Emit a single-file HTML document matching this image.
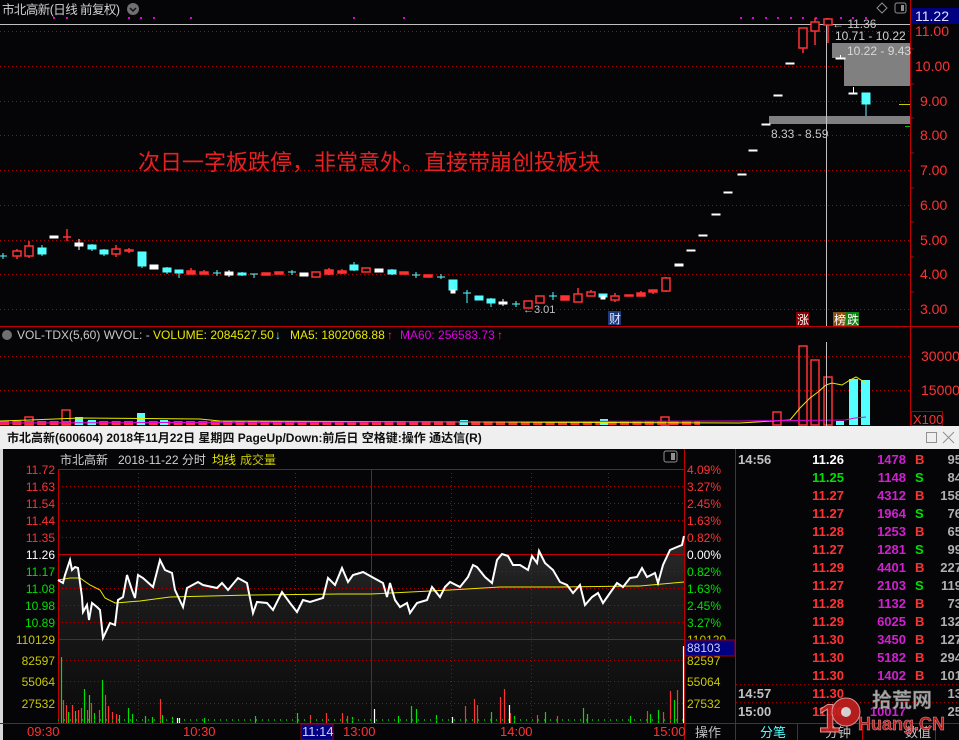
<!DOCTYPE html>
<html><head><meta charset="utf-8"><style>
html,body{margin:0;padding:0;background:#050508;width:959px;height:740px;overflow:hidden}
svg{display:block}
text{font-family:"Liberation Sans","Noto Sans CJK SC",sans-serif}
</style></head><body>
<svg width="959" height="740" viewBox="0 0 959 740" xmlns="http://www.w3.org/2000/svg">
<rect width="959" height="740" fill="#050508"/>
<!-- TOP CHART -->
<text x="2" y="14" font-size="12.5" fill="#d0d0d0" textLength="118">市北高新(日线 前复权)</text>
<circle cx="133" cy="9" r="6" fill="#707070"/><path d="M130 8l3 3 3-3" stroke="#111" stroke-width="1.5" fill="none"/>
<g fill="#e000e0"><rect x="53" y="17" width="2" height="2"/><rect x="66" y="17" width="2" height="2"/><rect x="128" y="17" width="2" height="2"/><rect x="140" y="17" width="2" height="2"/><rect x="153" y="17" width="2" height="2"/><rect x="190" y="17" width="2" height="2"/><rect x="353" y="17" width="2" height="2"/><rect x="403" y="17" width="2" height="2"/><rect x="740" y="17" width="2" height="2"/><rect x="752" y="17" width="2" height="2"/><rect x="765" y="17" width="2" height="2"/><rect x="777" y="17" width="2" height="2"/><rect x="790" y="17" width="2" height="2"/><rect x="802" y="17" width="2" height="2"/><rect x="815" y="17" width="2" height="2"/><rect x="840" y="17" width="2" height="2"/><rect x="852" y="17" width="2" height="2"/><rect x="865" y="17" width="2" height="2"/></g>
<path d="M882 3l5 5-5 5-5-5z" stroke="#909090" fill="none"/>
<rect x="895" y="3" width="11" height="10" rx="2" stroke="#909090" fill="none"/><rect x="901" y="5" width="3" height="6" fill="#909090"/>
<line x1="0" y1="24.5" x2="910" y2="24.5" stroke="#c0c0c0"/>
<g stroke="#b00000" stroke-dasharray="1,3">
<line x1="0" y1="31.5" x2="910" y2="31.5"/><line x1="0" y1="66.5" x2="910" y2="66.5"/><line x1="0" y1="101.5" x2="910" y2="101.5"/><line x1="0" y1="135.5" x2="910" y2="135.5"/><line x1="0" y1="170.5" x2="910" y2="170.5"/><line x1="0" y1="205.5" x2="910" y2="205.5"/><line x1="0" y1="240.5" x2="910" y2="240.5"/><line x1="0" y1="274.5" x2="910" y2="274.5"/><line x1="0" y1="309.5" x2="910" y2="309.5"/>
</g>
<line x1="910.5" y1="0" x2="910.5" y2="426" stroke="#c00000"/>
<g stroke="#c00000"><line x1="910" y1="49" x2="914" y2="49"/><line x1="910" y1="84" x2="914" y2="84"/><line x1="910" y1="118" x2="914" y2="118"/><line x1="910" y1="153" x2="914" y2="153"/><line x1="910" y1="188" x2="914" y2="188"/><line x1="910" y1="222" x2="914" y2="222"/><line x1="910" y1="257" x2="914" y2="257"/><line x1="910" y1="292" x2="914" y2="292"/></g>
<g font-size="14" fill="#ff3232"><text x="915" y="36">11.00</text><text x="915" y="71">10.00</text><text x="920" y="106">9.00</text><text x="920" y="140">8.00</text><text x="920" y="175">7.00</text><text x="920" y="210">6.00</text><text x="920" y="245">5.00</text><text x="920" y="279">4.00</text><text x="920" y="314">3.00</text></g>
<rect x="911" y="8" width="48" height="16" fill="#000080"/><text x="915" y="21" font-size="14" fill="#e0e0ff">11.22</text>
<line x1="906" y1="62.5" x2="910" y2="62.5" stroke="#ff3232"/><line x1="899" y1="104.5" x2="910" y2="104.5" stroke="#c8c800"/><line x1="905" y1="126.5" x2="910" y2="126.5" stroke="#00c000"/>
<rect x="832" y="43" width="78" height="15" fill="#808080"/><rect x="844" y="58" width="66" height="28" fill="#808080"/><rect x="769" y="116" width="141" height="8" fill="#808080"/>
<text x="835" y="40" font-size="12" fill="#d0d0d0">10.71 - 10.22</text>
<text x="847" y="55" font-size="12" fill="#d8d8d8">10.22 - 9.43</text>
<text x="771" y="138" font-size="12" fill="#c8c8c8">8.33 - 8.59</text>
<text x="832" y="28" font-size="12" fill="#c0c0c0">← 11.36</text>
<text x="523" y="313" font-size="11" fill="#c0c0c0">←3.01</text>
<line x1="826.5" y1="18" x2="826.5" y2="326" stroke="#c0c0c0"/>
<g>
<g stroke="#54ffff" fill="#54ffff">
<line x1="3" y1="253" x2="3" y2="259"/><line x1="-1" y1="256" x2="7" y2="256"/>
<line x1="42" y1="245" x2="42" y2="256"/><rect x="38" y="248" width="8" height="6"/>
<line x1="92" y1="244" x2="92" y2="251"/><rect x="88" y="245" width="8" height="4"/>
<line x1="104" y1="249" x2="104" y2="256"/><rect x="100" y="250" width="8" height="4"/>
<line x1="142" y1="252" x2="142" y2="268"/><rect x="138" y="252" width="8" height="14"/>
<line x1="167" y1="267" x2="167" y2="274"/><rect x="163" y="268" width="8" height="4"/>
<line x1="179" y1="270" x2="179" y2="278"/><rect x="175" y="270" width="8" height="3"/>
<line x1="217" y1="270" x2="217" y2="276"/><line x1="213" y1="273" x2="221" y2="273"/>
<line x1="242" y1="272" x2="242" y2="276"/><rect x="238" y="273" width="8" height="2"/>
<line x1="254" y1="274" x2="254" y2="278"/><line x1="250" y1="274" x2="258" y2="274"/>
<line x1="292" y1="270" x2="292" y2="275"/><line x1="288" y1="272" x2="296" y2="272"/>
<line x1="354" y1="262" x2="354" y2="271"/><rect x="350" y="265" width="8" height="5"/>
<line x1="392" y1="269" x2="392" y2="275"/><rect x="388" y="270" width="8" height="4"/>
<line x1="416" y1="272" x2="416" y2="278"/><line x1="412" y1="275" x2="420" y2="275"/>
<line x1="441" y1="274" x2="441" y2="279"/><line x1="437" y1="277" x2="445" y2="277"/>
<rect x="449" y="280" width="8" height="10"/>
<line x1="467" y1="290" x2="467" y2="303"/><line x1="463" y1="293" x2="471" y2="293"/>
<rect x="475" y="296" width="8" height="4"/>
<line x1="491" y1="298" x2="491" y2="307"/><rect x="487" y="299" width="8" height="4"/>
<line x1="516" y1="301" x2="516" y2="307"/><line x1="512" y1="304" x2="520" y2="304"/>
<line x1="553" y1="292" x2="553" y2="300"/><line x1="549" y1="296" x2="557" y2="296"/>
<rect x="599" y="294" width="8" height="3"/>
<line x1="866" y1="93" x2="866" y2="116"/><rect x="862" y="93" width="8" height="11"/>
</g>
<g fill="#ffffff" stroke="#ffffff">
<rect x="50" y="236" width="8" height="2"/>
<line x1="79" y1="239" x2="79" y2="250"/><rect x="75" y="243" width="8" height="3"/>
<rect x="150" y="265" width="8" height="4"/>
<line x1="229" y1="270" x2="229" y2="277"/><rect x="225" y="272" width="8" height="3"/>
<rect x="300" y="273" width="8" height="3"/>
<rect x="375" y="269" width="8" height="3"/>
<rect x="451" y="290" width="4" height="3"/>
<line x1="503" y1="299" x2="503" y2="306"/><rect x="499" y="302" width="8" height="2"/>
<rect x="601" y="296" width="4" height="3"/>
<rect x="675" y="264" width="8" height="2"/><rect x="687" y="250" width="8" height="1"/><rect x="699" y="235" width="8" height="1"/><rect x="712" y="214" width="8" height="1"/><rect x="724" y="192" width="8" height="1"/><rect x="738" y="174" width="8" height="1"/><rect x="749" y="150" width="8" height="1"/><rect x="762" y="124" width="8" height="1"/><rect x="774" y="95" width="8" height="1"/><rect x="786" y="63" width="8" height="1"/>
<rect x="836" y="58" width="9" height="1"/><line x1="840.5" y1="55" x2="840.5" y2="58"/>
<rect x="849" y="93" width="8" height="1"/><line x1="853.5" y1="87" x2="853.5" y2="93"/>
</g>
<g stroke="#ff3232" fill="none" stroke-width="1.5">
<line x1="17" y1="249" x2="17" y2="259"/><rect x="13" y="251" width="8" height="5" fill="#050508"/>
<line x1="29" y1="241" x2="29" y2="258"/><rect x="25" y="246" width="8" height="10" fill="#050508"/>
<line x1="67" y1="229" x2="67" y2="241"/><line x1="63" y1="237" x2="71" y2="237"/>
<line x1="116" y1="245" x2="116" y2="257"/><rect x="112" y="249" width="8" height="5" fill="#050508"/>
<line x1="129" y1="248" x2="129" y2="253"/><rect x="125" y="250" width="8" height="1" fill="#ff3232"/>
<line x1="191" y1="268" x2="191" y2="274"/><rect x="187" y="271" width="8" height="3" fill="#ff3232"/>
<line x1="204" y1="270" x2="204" y2="274"/><rect x="200" y="272" width="8" height="2" fill="#ff3232"/>
<rect x="262" y="273" width="8" height="2" fill="#ff3232"/>
<rect x="275" y="272" width="8" height="2" fill="#ff3232"/>
<rect x="312" y="272" width="8" height="5" fill="#050508"/>
<line x1="329" y1="268" x2="329" y2="275"/><rect x="325" y="270" width="8" height="4" fill="#ff3232"/>
<line x1="342" y1="269" x2="342" y2="274"/><rect x="338" y="271" width="8" height="2" fill="#ff3232"/>
<rect x="362" y="268" width="8" height="4" fill="#050508"/>
<rect x="400" y="272" width="8" height="2" fill="#ff3232"/>
<rect x="424" y="275" width="8" height="2" fill="#ff3232"/>
<rect x="524" y="301" width="8" height="7" fill="#050508"/>
<rect x="536" y="296" width="8" height="7" fill="#050508"/>
<rect x="561" y="296" width="8" height="4" fill="#ff3232"/>
<line x1="578" y1="288" x2="578" y2="302"/><rect x="574" y="294" width="8" height="8" fill="#050508"/>
<line x1="591" y1="290" x2="591" y2="296"/><rect x="587" y="292" width="8" height="4" fill="#050508"/>
<line x1="615" y1="293" x2="615" y2="302"/><rect x="611" y="296" width="8" height="4" fill="#050508"/>
<rect x="625" y="295" width="8" height="1" fill="#ff3232"/>
<line x1="641" y1="291" x2="641" y2="296"/><rect x="637" y="293" width="8" height="3" fill="#ff3232"/>
<line x1="653" y1="290" x2="653" y2="294"/><rect x="649" y="290" width="8" height="2" fill="#ff3232"/>
<line x1="666" y1="277" x2="666" y2="292"/><rect x="662" y="278" width="8" height="13" fill="#050508"/>
<line x1="803" y1="28" x2="803" y2="53"/><rect x="799" y="28" width="8" height="20" fill="#050508"/>
<line x1="815" y1="18" x2="815" y2="45"/><rect x="811" y="22" width="8" height="9" fill="#050508"/>
<line x1="828" y1="18" x2="828" y2="43"/><rect x="824" y="19" width="8" height="6" fill="#050508"/>
</g>
</g>
<text x="138" y="170" font-size="22" fill="#e82020" textLength="462">次日一字板跌停，非常意外。直接带崩创投板块</text>
<rect x="608" y="311" width="13" height="14" fill="#1a3a7a"/><text x="609" y="323" font-size="12" fill="#e0e0ff">财</text>
<rect x="796" y="312" width="13" height="14" fill="#8a0000"/><text x="797" y="324" font-size="12" fill="#ffffff">涨</text>
<rect x="833" y="312" width="13" height="14" fill="#8a5010"/><text x="834" y="324" font-size="12" fill="#ffffff">榜</text>
<rect x="846" y="312" width="13" height="14" fill="#108010"/><text x="847" y="324" font-size="12" fill="#ffffff">跌</text>
<line x1="0" y1="326.5" x2="959" y2="326.5" stroke="#c00000"/>
<!-- VOLUME PANEL -->
<circle cx="7" cy="335" r="5" fill="#707070"/>
<text x="17" y="339" font-size="12" fill="#c8c8c8">VOL-TDX(5,60)  WVOL: -</text>
<text x="153" y="339" font-size="12" fill="#e8e800">VOLUME: 2084527.50</text><text x="275" y="339" font-size="12" fill="#54ffff">↓</text>
<text x="290" y="339" font-size="12" fill="#e8e800">MA5: 1802068.88</text><text x="387" y="339" font-size="12" fill="#ff3232">↑</text>
<text x="400" y="339" font-size="12" fill="#e000e0">MA60: 256583.73</text><text x="497" y="339" font-size="12" fill="#ff3232">↑</text>
<g stroke="#b00000" stroke-dasharray="1,3"><line x1="0" y1="356.5" x2="910" y2="356.5"/><line x1="0" y1="390.5" x2="910" y2="390.5"/></g>
<text x="921" y="361" font-size="14" fill="#ff3232">30000</text><text x="921" y="395" font-size="14" fill="#ff3232">15000</text>
<rect x="911.5" y="411.5" width="31" height="14" fill="none" stroke="#a00000"/><text x="913" y="424" font-size="13" fill="#ff3232">X100</text>
<path d="M0 423H700" stroke="#ff3232" stroke-width="4" stroke-dasharray="9,3.4"/>
<g fill="#54ffff"><rect x="75" y="417" width="8" height="8"/><rect x="137" y="413" width="8" height="12"/><rect x="88" y="420" width="8" height="5"/><rect x="160" y="420" width="8" height="5"/><rect x="460" y="420" width="8" height="5"/><rect x="600" y="419" width="8" height="6"/><rect x="836" y="421" width="8" height="4"/><rect x="849" y="379" width="9" height="46"/><rect x="861" y="380" width="9" height="45"/></g>
<g fill="none" stroke="#ff3232" stroke-width="1.5"><rect x="25" y="417" width="8" height="8"/><rect x="62" y="410" width="8" height="15"/><rect x="773" y="412" width="8" height="13"/><rect x="799" y="346" width="8" height="79"/><rect x="811" y="360" width="8" height="65"/><rect x="824" y="377" width="8" height="48"/><rect x="661" y="417" width="8" height="8"/></g>
<polyline points="0,421 30,420 80,418 200,419 220,421 740,423 790,420 800,408 810,398 818,392 826,385 832,383 842,385 850,380 856,377 866,383" fill="none" stroke="#e8e800"/>
<polyline points="0,423 740,421 845,420 855,418 866,417" fill="none" stroke="#e000e0"/>
<line x1="826.5" y1="342" x2="826.5" y2="426" stroke="#c0c0c0"/>
<!-- POPUP WINDOW -->
<rect x="0" y="426" width="959" height="23" fill="#efefef"/>
<text x="7" y="442" font-size="12" font-weight="bold" fill="#101010">市北高新(600604) 2018年11月22日 星期四 PageUp/Down:前后日 空格键:操作 通达信(R)</text>
<rect x="926.5" y="432.5" width="10" height="10" fill="none" stroke="#909090"/>
<path d="M943 432l11 11M954 432l-11 11" stroke="#909090"/>
<rect x="0" y="449" width="3" height="291" fill="#d8d8d8"/>
<text x="60" y="464" font-size="12" fill="#d0d0d0">市北高新</text><text x="118" y="464" font-size="12" fill="#d0d0d0">2018-11-22 分时</text><text x="212" y="464" font-size="12" fill="#e8e800">均线</text><text x="240" y="464" font-size="12" fill="#c8c800">成交量</text>
<rect x="664" y="451" width="13" height="11" rx="2" fill="none" stroke="#909090"/><rect x="671" y="453" width="4" height="7" fill="#909090"/>
<defs><linearGradient id="g1" x1="0" y1="0" x2="0" y2="1"><stop offset="0" stop-color="#2c2c2c"/><stop offset="0.35" stop-color="#1a1a1a"/><stop offset="1" stop-color="#0b0b0b"/></linearGradient></defs>
<polygon fill="url(#g1)" points="58,723 58,580 63,583 65,575 70,560 72,570 75,567 78,568 82,597 83,612 87,605 89,620 92,603 97,607 100,610 103,638 110,623 115,625 118,600 123,597 127,575 132,590 135,598 138,575 143,578 153,587 160,560 165,570 172,573 175,590 183,607 187,588 198,582 203,585 217,588 222,583 228,590 238,578 247,583 253,613 257,602 267,603 273,610 282,592 290,603 297,612 303,600 310,602 323,598 328,578 335,585 342,568 348,582 353,575 360,573 363,572 372,577 383,583 387,597 390,583 395,600 400,607 407,603 410,613 417,603 427,600 432,587 440,597 445,587 450,582 460,587 468,577 473,565 477,567 485,577 492,583 497,560 502,554 508,556 513,565 520,565 528,570 532,556 537,563 539,551 545,563 553,570 560,582 567,585 573,593 580,585 585,605 592,597 598,593 603,603 610,593 617,583 623,587 630,578 637,577 642,568 647,577 655,573 658,583 663,565 670,550 677,547 682,545 684,536 684,723"/>
<g stroke="#b00000" stroke-dasharray="1,3">
<line x1="58" y1="486.5" x2="684" y2="486.5"/><line x1="58" y1="503.5" x2="684" y2="503.5"/><line x1="58" y1="520.5" x2="684" y2="520.5"/><line x1="58" y1="537.5" x2="684" y2="537.5"/><line x1="58" y1="571.5" x2="684" y2="571.5"/><line x1="58" y1="588.5" x2="684" y2="588.5"/><line x1="58" y1="605.5" x2="684" y2="605.5"/><line x1="58" y1="622.5" x2="684" y2="622.5"/><line x1="58" y1="660.5" x2="684" y2="660.5"/><line x1="58" y1="681.5" x2="684" y2="681.5"/><line x1="58" y1="703.5" x2="684" y2="703.5"/>
<line x1="138.5" y1="469" x2="138.5" y2="723"/><line x1="295.5" y1="469" x2="295.5" y2="723"/><line x1="451.5" y1="469" x2="451.5" y2="723"/><line x1="531.5" y1="469" x2="531.5" y2="723"/><line x1="608.5" y1="469" x2="608.5" y2="723"/>
</g>
<g stroke="#c00000" fill="none">
<line x1="58" y1="469.5" x2="684" y2="469.5"/><line x1="58" y1="554.5" x2="684" y2="554.5"/><line x1="58" y1="639.5" x2="684" y2="639.5"/><line x1="0" y1="723.5" x2="959" y2="723.5"/>
<line x1="58.5" y1="469" x2="58.5" y2="723"/><line x1="371.5" y1="469" x2="371.5" y2="723"/><line x1="684.5" y1="449" x2="684.5" y2="740"/><line x1="735.5" y1="449" x2="735.5" y2="740"/>
</g>
<polyline fill="none" stroke="#e8e800" points="58,580 70,578 80,578 90,585 100,590 105,598 115,603 140,601 170,597 250,595 340,594 371,594 450,590 500,587 560,587 640,586 684,582"/>
<polyline fill="none" stroke="#ffffff" stroke-width="2" points="58,580 63,583 65,575 70,560 72,570 75,567 78,568 82,597 83,612 87,605 89,620 92,603 97,607 100,610 103,638 110,623 115,625 118,600 123,597 127,575 132,590 135,598 138,575 143,578 153,587 160,560 165,570 172,573 175,590 183,607 187,588 198,582 203,585 217,588 222,583 228,590 238,578 247,583 253,613 257,602 267,603 273,610 282,592 290,603 297,612 303,600 310,602 323,598 328,578 335,585 342,568 348,582 353,575 360,573 363,572 372,577 383,583 387,597 390,583 395,600 400,607 407,603 410,613 417,603 427,600 432,587 440,597 445,587 450,582 460,587 468,577 473,565 477,567 485,577 492,583 497,560 502,554 508,556 513,565 520,565 528,570 532,556 537,563 539,551 545,563 553,570 560,582 567,585 573,593 580,585 585,605 592,597 598,593 603,603 610,593 617,583 623,587 630,578 637,577 642,568 647,577 655,573 658,583 663,565 670,550 677,547 682,545 684,536"/>
<g stroke-width="1.2">
<g stroke="#00e000"><line x1="61.5" y1="723" x2="61.5" y2="657"/><line x1="84.5" y1="723" x2="84.5" y2="689"/><line x1="89.5" y1="723" x2="89.5" y2="695"/><line x1="102.5" y1="723" x2="102.5" y2="680"/><line x1="68.5" y1="723" x2="68.5" y2="712"/><line x1="75.5" y1="723" x2="75.5" y2="711"/><line x1="94.5" y1="723" x2="94.5" y2="713"/><line x1="119.5" y1="723" x2="119.5" y2="715"/><line x1="128.5" y1="723" x2="128.5" y2="708"/><line x1="132.5" y1="723" x2="132.5" y2="714"/><line x1="145.5" y1="723" x2="145.5" y2="716"/><line x1="152.5" y1="723" x2="152.5" y2="717"/><line x1="162.5" y1="723" x2="162.5" y2="715"/><line x1="172.5" y1="723" x2="172.5" y2="717"/><line x1="204.5" y1="723" x2="204.5" y2="718"/><line x1="255.5" y1="723" x2="255.5" y2="716"/><line x1="297.5" y1="723" x2="297.5" y2="713"/><line x1="352.5" y1="723" x2="352.5" y2="717"/><line x1="398.5" y1="723" x2="398.5" y2="716"/><line x1="411.5" y1="723" x2="411.5" y2="706"/><line x1="416.5" y1="723" x2="416.5" y2="709"/><line x1="436.5" y1="723" x2="436.5" y2="715"/><line x1="491.5" y1="723" x2="491.5" y2="712"/><line x1="514.5" y1="723" x2="514.5" y2="716"/><line x1="545.5" y1="723" x2="545.5" y2="712"/><line x1="583.5" y1="723" x2="583.5" y2="708"/><line x1="587.5" y1="723" x2="587.5" y2="714"/><line x1="650.5" y1="723" x2="650.5" y2="714"/><line x1="658.5" y1="723" x2="658.5" y2="710"/><line x1="674.5" y1="723" x2="674.5" y2="700"/><line x1="630.5" y1="723" x2="630.5" y2="716"/></g>
<g stroke="#ff3232"><line x1="63.5" y1="723" x2="63.5" y2="700"/><line x1="66.5" y1="723" x2="66.5" y2="705"/><line x1="72.5" y1="723" x2="72.5" y2="705"/><line x1="78.5" y1="723" x2="78.5" y2="710"/><line x1="81.5" y1="723" x2="81.5" y2="708"/><line x1="87.5" y1="723" x2="87.5" y2="710"/><line x1="91.5" y1="723" x2="91.5" y2="703"/><line x1="99.5" y1="723" x2="99.5" y2="710"/><line x1="105.5" y1="723" x2="105.5" y2="695"/><line x1="108.5" y1="723" x2="108.5" y2="706"/><line x1="112.5" y1="723" x2="112.5" y2="712"/><line x1="116.5" y1="723" x2="116.5" y2="714"/><line x1="160.5" y1="723" x2="160.5" y2="699"/><line x1="310.5" y1="723" x2="310.5" y2="715"/><line x1="326.5" y1="723" x2="326.5" y2="713"/><line x1="342.5" y1="723" x2="342.5" y2="713"/><line x1="347.5" y1="723" x2="347.5" y2="716"/><line x1="465.5" y1="723" x2="465.5" y2="706"/><line x1="474.5" y1="723" x2="474.5" y2="699"/><line x1="477.5" y1="723" x2="477.5" y2="705"/><line x1="500.5" y1="723" x2="500.5" y2="697"/><line x1="504.5" y1="723" x2="504.5" y2="689"/><line x1="510.5" y1="723" x2="510.5" y2="713"/><line x1="537.5" y1="723" x2="537.5" y2="715"/><line x1="557.5" y1="723" x2="557.5" y2="716"/><line x1="647.5" y1="723" x2="647.5" y2="711"/><line x1="663.5" y1="723" x2="663.5" y2="712"/><line x1="670.5" y1="723" x2="670.5" y2="691"/><line x1="677.5" y1="723" x2="677.5" y2="690"/></g>
<g stroke="#ffffff"><line x1="177.5" y1="723" x2="177.5" y2="718"/><line x1="179.5" y1="723" x2="179.5" y2="718"/><line x1="374.5" y1="723" x2="374.5" y2="709"/><line x1="452.5" y1="723" x2="452.5" y2="717"/><line x1="509.5" y1="723" x2="509.5" y2="705"/><line x1="683.5" y1="723" x2="683.5" y2="646"/></g>
<path d="M58 720H684" stroke="#00a000" stroke-width="2" stroke-dasharray="1,5"/>
</g>
<g font-size="12" text-anchor="end">
<text x="55" y="474" fill="#ff3232">11.72</text><text x="55" y="491" fill="#ff3232">11.63</text><text x="55" y="508" fill="#ff3232">11.54</text><text x="55" y="525" fill="#ff3232">11.44</text><text x="55" y="542" fill="#ff3232">11.35</text><text x="55" y="559" fill="#ffffff">11.26</text><text x="55" y="576" fill="#00e000">11.17</text><text x="55" y="593" fill="#00e000">11.08</text><text x="55" y="610" fill="#00e000">10.98</text><text x="55" y="627" fill="#00e000">10.89</text><text x="55" y="644" fill="#c8c800">110129</text><text x="55" y="665" fill="#c8c800">82597</text><text x="55" y="686" fill="#c8c800">55064</text><text x="55" y="708" fill="#c8c800">27532</text>
</g>
<g font-size="12">
<text x="687" y="474" fill="#ff3232">4.09%</text><text x="687" y="491" fill="#ff3232">3.27%</text><text x="687" y="508" fill="#ff3232">2.45%</text><text x="687" y="525" fill="#ff3232">1.63%</text><text x="687" y="542" fill="#ff3232">0.82%</text><text x="687" y="559" fill="#ffffff">0.00%</text><text x="687" y="576" fill="#00e000">0.82%</text><text x="687" y="593" fill="#00e000">1.63%</text><text x="687" y="610" fill="#00e000">2.45%</text><text x="687" y="627" fill="#00e000">3.27%</text><text x="687" y="644" fill="#c8c800">110129</text>
<rect x="685" y="640" width="50" height="16" fill="#000080" stroke="#a00000"/><text x="687" y="652" fill="#d0d0ff">88103</text>
<text x="687" y="665" fill="#c8c800">82597</text><text x="687" y="686" fill="#c8c800">55064</text><text x="687" y="708" fill="#c8c800">27532</text>
</g>
<g font-size="13" fill="#ff3232"><text x="27" y="736">09:30</text><text x="183" y="736">10:30</text><text x="343" y="736">13:00</text><text x="500" y="736">14:00</text><text x="653" y="736">15:00</text></g>
<rect x="301" y="724" width="32" height="16" fill="#000080" stroke="#a00000"/><text x="302" y="736" font-size="13" fill="#d0d0ff">11:14</text>
<text x="695" y="737" font-size="13" fill="#c0c0c0">操作</text>
<g font-size="13" font-weight="bold">
<text x="738" y="464" fill="#c0c0c0">14:56</text>
<g text-anchor="end">
<text x="844" y="464" fill="#ffffff">11.26</text><text x="844" y="482" fill="#00e000">11.25</text><text x="844" y="500" fill="#ff3232">11.27</text><text x="844" y="518" fill="#ff3232">11.27</text><text x="844" y="536" fill="#ff3232">11.28</text><text x="844" y="554" fill="#ff3232">11.27</text><text x="844" y="572" fill="#ff3232">11.29</text><text x="844" y="590" fill="#ff3232">11.27</text><text x="844" y="608" fill="#ff3232">11.28</text><text x="844" y="626" fill="#ff3232">11.29</text><text x="844" y="644" fill="#ff3232">11.30</text><text x="844" y="662" fill="#ff3232">11.30</text><text x="844" y="680" fill="#ff3232">11.30</text><text x="844" y="698" fill="#ff3232">11.30</text><text x="844" y="716" fill="#ff3232">11.30</text>
<g fill="#d020d0"><text x="906" y="464">1478</text><text x="906" y="482">1148</text><text x="906" y="500">4312</text><text x="906" y="518">1964</text><text x="906" y="536">1253</text><text x="906" y="554">1281</text><text x="906" y="572">4401</text><text x="906" y="590">2103</text><text x="906" y="608">1132</text><text x="906" y="626">6025</text><text x="906" y="644">3450</text><text x="906" y="662">5182</text><text x="906" y="680">1402</text><text x="906" y="716">10017</text></g>
<g fill="#b0b0b0"><text x="962" y="464">95</text><text x="962" y="482">84</text><text x="962" y="500">158</text><text x="962" y="518">76</text><text x="962" y="536">65</text><text x="962" y="554">99</text><text x="962" y="572">227</text><text x="962" y="590">119</text><text x="962" y="608">73</text><text x="962" y="626">132</text><text x="962" y="644">127</text><text x="962" y="662">294</text><text x="962" y="680">101</text><text x="962" y="698">13</text><text x="962" y="716">25</text></g>
</g>
<g><text x="915" y="464" fill="#ff3232">B</text><text x="915" y="482" fill="#00e000">S</text><text x="915" y="500" fill="#ff3232">B</text><text x="915" y="518" fill="#00e000">S</text><text x="915" y="536" fill="#ff3232">B</text><text x="915" y="554" fill="#00e000">S</text><text x="915" y="572" fill="#ff3232">B</text><text x="915" y="590" fill="#00e000">S</text><text x="915" y="608" fill="#ff3232">B</text><text x="915" y="626" fill="#ff3232">B</text><text x="915" y="644" fill="#ff3232">B</text><text x="915" y="662" fill="#ff3232">B</text><text x="915" y="680" fill="#ff3232">B</text></g>
<text x="738" y="698" fill="#c0c0c0">14:57</text><text x="738" y="716" fill="#c0c0c0">15:00</text>
</g>
<g stroke="#a00000" stroke-dasharray="1,3"><line x1="736" y1="684.5" x2="959" y2="684.5"/><line x1="736" y1="702.5" x2="959" y2="702.5"/></g>
<g stroke="#c00000"><line x1="797.5" y1="723" x2="797.5" y2="740"/><line x1="862.5" y1="723" x2="862.5" y2="740"/><line x1="935.5" y1="723" x2="935.5" y2="740"/></g>
<text x="760" y="737" font-size="13" fill="#54ffff">分笔</text><text x="825" y="737" font-size="13" fill="#c0c0c0">分钟</text><text x="905" y="737" font-size="13" fill="#c0c0c0">数值</text>
<g opacity="0.9">
<text x="818" y="732" font-size="40" font-weight="bold" fill="#c82020" stroke="#f0a0a0" stroke-width="1">1</text>
<circle cx="846" cy="712" r="14" fill="#c82020" stroke="#f0a0a0"/><circle cx="846" cy="712" r="5" fill="#e8e8e8"/>
<text x="872" y="707" font-size="20" font-weight="bold" fill="#b8b8b8" stroke="#606060" stroke-width="0.5">拾荒网</text>
<text x="858" y="730" font-size="18" font-weight="bold" fill="#c82020" stroke="#f0a0a0" stroke-width="0.5">Huang.CN</text>
</g>
</svg>
</body></html>
